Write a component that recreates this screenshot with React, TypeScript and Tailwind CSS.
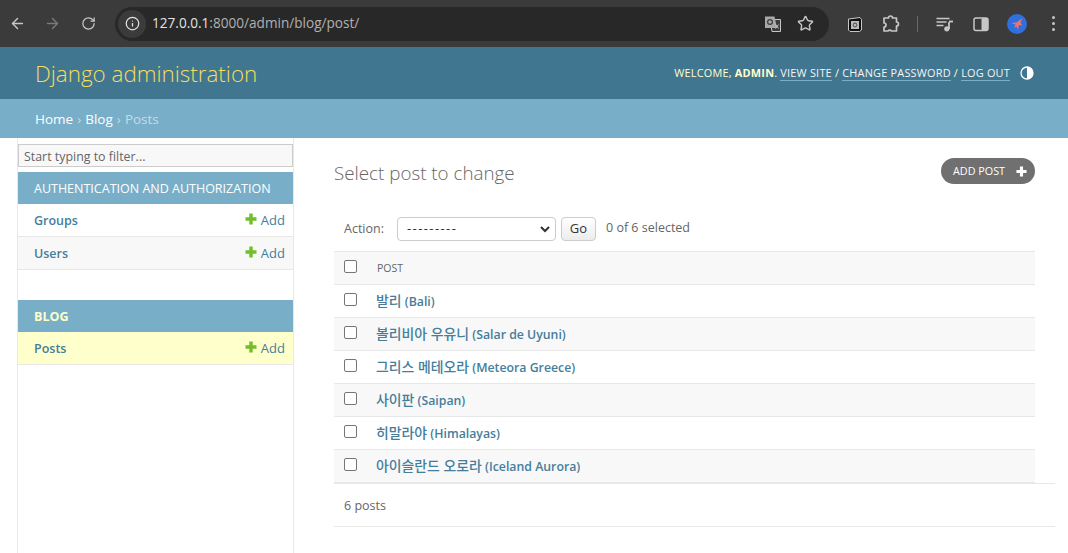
import { ArrowLeft, ArrowRight, RotateCw, Star, Info } from "lucide-react";

const posts = [
  { ko: "발리", en: "(Bali)" },
  { ko: "볼리비아 우유니", en: "(Salar de Uyuni)" },
  { ko: "그리스 메테오라", en: "(Meteora Greece)" },
  { ko: "사이판", en: "(Saipan)" },
  { ko: "히말라야", en: "(Himalayas)" },
  { ko: "아이슬란드 오로라", en: "(Iceland Aurora)" },
];

function PlusIcon({ color, size }: { color: string; size: number }) {
  return (
    <svg width={size} height={size} viewBox="0 0 12 12">
      <path d="M4.3 0.5h3.4v3.8h3.8v3.4H7.7v3.8H4.3V7.7H0.5V4.3h3.8z" fill={color} />
    </svg>
  );
}

function AddLink() {
  return (
    <span className="flex items-center gap-[4px] text-[13px] font-normal text-[#447e9b]">
      <span className="mt-[-4px]">
        <PlusIcon color="#70bf2b" size={12} />
      </span>
      Add
    </span>
  );
}

function Toolbar() {
  return (
    <div className="flex h-[47px] items-center bg-[#3b3b3b] text-[#c7c7c7]">
      <div className="flex w-[115px] items-center gap-[18px] pl-[9px]">
        <ArrowLeft size={17} />
        <ArrowRight size={17} className="text-[#7a7a7a]" />
        <RotateCw size={15} className="ml-[2px]" />
      </div>
      <div className="flex h-[34px] w-[714px] items-center rounded-full bg-[#282828] pr-[15px]">
        <span className="ml-[3px] flex h-[28px] w-[28px] items-center justify-center rounded-full bg-[#3b3b3b]">
          <Info size={15} className="text-[#e3e3e3]" />
        </span>
        <span className="ml-[6px] flex-1 text-[13.6px] text-[#e3e3e3]">
          127.0.0.1<span className="text-[#b0b0b0]">:8000/admin/blog/post/</span>
        </span>
        <svg width="18" height="18" viewBox="0 0 18 18" className="mr-[15px]">
          <path d="M6 4.5h10.5v12H8z" fill="#3b3b3b" stroke="#c7c7c7" strokeWidth="1" />
          <path d="M1 1.5h9.5l2.5 11.5H1z" fill="#a8a8a8" />
          <circle cx="6" cy="7" r="2.4" fill="none" stroke="#3b3b3b" strokeWidth="1.2" />
          <path d="M11.5 9.5l3 4M14.5 9.5l-3 4" stroke="#c7c7c7" strokeWidth="1" />
        </svg>
        <Star size={17} strokeWidth={2} />
      </div>
      <div className="ml-[18px] flex items-center">
        <svg width="16" height="18" viewBox="0 0 16 18">
          <path d="M1.5 4L13 2.5l1.5 2V15l-2 1.5H3L1.5 15z" fill="#111" stroke="#c7c7c7" />
          <rect x="4" y="6" width="8" height="8" fill="#bbb" />
          <circle cx="8" cy="10" r="2.4" fill="#666" />
          <circle cx="8" cy="10" r="0.9" fill="#ddd" />
        </svg>
        <svg width="18" height="18" viewBox="0 0 18 18" className="ml-[19px]">
          <path
            d="M2 3h4.5a2 2 0 0 1 4 0H14.5v4a2 2 0 0 1 0 4v5H9.5a2.2 2.2 0 0 0-3.5 0H2v-4a1.8 1.8 0 0 0 0-4z"
            fill="none"
            stroke="#c7c7c7"
            strokeWidth="1.7"
            strokeLinejoin="round"
          />
        </svg>
        <span className="ml-[17px] h-[16px] w-px bg-[#6a6a6a]" />
        <svg width="18" height="16" viewBox="0 0 18 16" className="ml-[18px]">
          <path d="M0.5 2.5h13M0.5 6h10M0.5 9.5h7" stroke="#c7c7c7" strokeWidth="1.6" fill="none" />
          <path d="M13 6v7" stroke="#c7c7c7" strokeWidth="1.8" fill="none" />
          <path d="M13 5.5h4" stroke="#c7c7c7" strokeWidth="1.8" fill="none" />
          <circle cx="10.8" cy="12.8" r="2.6" fill="#c7c7c7" />
        </svg>
        <svg width="16" height="16" viewBox="0 0 16 16" className="ml-[19px]">
          <rect x="1" y="2" width="14" height="12.5" rx="2" fill="none" stroke="#c7c7c7" strokeWidth="1.5" />
          <rect x="8.5" y="2" width="6.5" height="12.5" rx="1.5" fill="#c7c7c7" />
        </svg>
        <span className="ml-[18px] flex h-[20px] w-[20px] items-center justify-center rounded-full bg-[#2f6fde]">
          <svg width="16" height="16" viewBox="0 0 16 16">
            <path d="M13.5 2L7.5 6.5 2 7l4.5 1.5L5 12l2.5-1.5L9 14l1-5 3.5.5-2-3z" fill="#f0736a" />
          </svg>
        </span>
        <span className="ml-[25px] flex flex-col gap-[3px]">
          <span className="h-[3px] w-[3px] rounded-full bg-[#c7c7c7]" />
          <span className="h-[3px] w-[3px] rounded-full bg-[#c7c7c7]" />
          <span className="h-[3px] w-[3px] rounded-full bg-[#c7c7c7]" />
        </span>
      </div>
    </div>
  );
}

export default function App() {
  return (
    <div className="flex h-[553px] flex-col overflow-hidden bg-white font-['Open_Sans','Noto_Sans_CJK_KR',sans-serif]">
      <Toolbar />

      <header className="flex h-[52px] items-center justify-between bg-[#417690] pl-[35px] pr-[34px]">
        <h1 className="mt-[2px] text-[22.4px] font-light text-[#f5dd5d]">Django administration</h1>
        <div className="flex items-center text-[10.9px] tracking-[0.22px] text-[#ffc] uppercase">
          <span className="mt-[1px]">
            Welcome, <strong className="font-bold">admin</strong>.{" "}
            <span className="border-b border-[#79aec8] text-[#f5f5f5]">View site</span> /{" "}
            <span className="border-b border-[#79aec8] text-[#f5f5f5]">Change password</span> /{" "}
            <span className="border-b border-[#79aec8] text-[#f5f5f5]">Log out</span>
          </span>
          <svg width="14" height="14" viewBox="0 0 14 14" className="ml-[10px]">
            <circle cx="7" cy="7" r="6" fill="none" stroke="#fff" strokeWidth="1.3" />
            <path d="M7 1a6 6 0 0 1 0 12z" fill="#fff" />
          </svg>
        </div>
      </header>

      <nav className="flex h-[39px] items-center bg-[#79aec8] pl-[35px] pt-[2px] text-[13.5px] text-white">
        Home <span className="mx-[4px] text-[#c4dce8]">›</span> Blog{" "}
        <span className="mx-[4px] text-[#c4dce8]">›</span> <span className="text-[#c4dce8]">Posts</span>
      </nav>

      <div className="flex min-h-0 flex-1">
        <aside className="ml-[17px] w-[277px] border-x border-[#e8e8e8] pt-[6px]">
          <div className="flex h-[23px] items-center border border-[#ccc] bg-[#f8f8f8] pl-[5px] pt-[3px] text-[12.4px] text-[#666]">
            Start typing to filter...
          </div>
          <div className="mt-[5px] flex h-[32px] items-center bg-[#79aec8] pl-[16px] pt-[2px] text-[12.5px] text-white uppercase">
            Authentication and authorization
          </div>
          <div className="flex h-[33px] items-center justify-between border-b border-[#e8e8e8] pl-[16px] pr-[8px] pt-[2px] text-[12.5px] font-semibold text-[#447e9b]">
            Groups
            <AddLink />
          </div>
          <div className="flex h-[33px] items-center justify-between border-b border-[#e8e8e8] bg-[#f8f8f8] pl-[16px] pr-[8px] pt-[2px] text-[12.5px] font-semibold text-[#447e9b]">
            Users
            <AddLink />
          </div>
          <div className="mt-[30px] flex h-[32px] items-center bg-[#79aec8] pl-[16px] pt-[2px] text-[12.5px] font-bold text-[#ffc] uppercase">
            Blog
          </div>
          <div className="flex h-[33px] items-center justify-between border-b border-[#e8e8e8] bg-[#ffc] pl-[16px] pr-[8px] pt-[2px] text-[12.5px] font-semibold text-[#447e9b]">
            Posts
            <AddLink />
          </div>
        </aside>

        <main className="flex-1 pl-[40px] pr-[13px]">
          <div className="flex items-start justify-between pr-[20px] pt-[20px]">
            <h2 className="text-[18.8px] leading-[30px] font-light text-[#666]">Select post to change</h2>
            <span className="flex h-[26px] w-[94px] items-center justify-between rounded-full bg-[#707070] pl-[12px] pr-[8px] text-[10.8px] text-white uppercase">
              Add post
              <PlusIcon color="#fff" size={11} />
            </span>
          </div>

          <div className="mt-[29px] flex h-[24px] items-center pl-[10px] text-[12.5px] text-[#666]">
            <span className="w-[53px] pt-[1px]">Action:</span>
            <span className="flex h-[24px] w-[159px] items-center justify-between rounded-[4px] border border-[#ccc] pl-[9px] pr-[5px] text-[13px] tracking-[1.4px] text-[#333]">
              ---------
              <svg width="10" height="7" viewBox="0 0 10 7">
                <path d="M1 1l4 4 4-4" fill="none" stroke="#333" strokeWidth="2" />
              </svg>
            </span>
            <span className="ml-[5px] flex h-[24px] w-[35px] items-center justify-center rounded-[4px] border border-[#ccc] bg-gradient-to-b from-white to-[#ececec] text-[13px] text-[#333]">
              Go
            </span>
            <span className="ml-[10px] mt-[-2px]">0 of 6 selected</span>
          </div>

          <div className="mt-[10px] mr-[20px]">
            <div className="flex h-[34px] items-center border-y border-[#e8e8e8] bg-[#f8f8f8] pl-[10px]">
              <span className="mt-[-4px] h-[13px] w-[13px] rounded-[2px] border border-[#767676] bg-white" />
              <span className="ml-[20px] pt-[1px] text-[10.5px] text-[#666] uppercase">Post</span>
            </div>
            {posts.map((post, i) => (
              <div
                key={post.en}
                className={`flex h-[33px] items-center border-b border-[#e8e8e8] pl-[10px] ${i % 2 === 1 ? "bg-[#f8f8f8]" : "bg-white"}`}
              >
                <span className="mt-[-4px] h-[13px] w-[13px] rounded-[2px] border border-[#767676] bg-white" />
                <span className="ml-[19px] text-[12.3px] font-semibold text-[#447e9b]">
                  <span className="text-[13.9px] font-medium">{post.ko}</span> {post.en}
                </span>
              </div>
            ))}
          </div>

          <div className="flex h-[44px] items-center border-y border-[#e8e8e8] pl-[10px] pt-[2px] text-[12.5px] text-[#666]">
            6 posts
          </div>
        </main>
      </div>
    </div>
  );
}
